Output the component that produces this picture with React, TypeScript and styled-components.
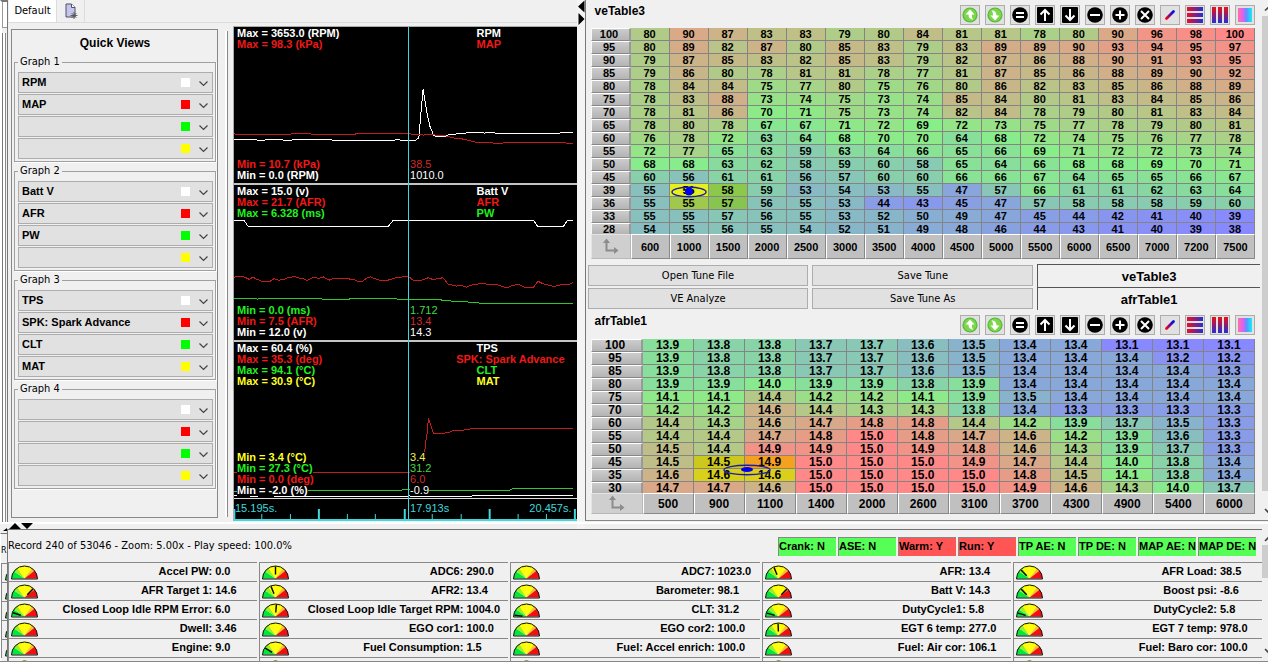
import React from 'react';
import styled, { createGlobalStyle } from 'styled-components';

const UI = '"DejaVu Sans Condensed", "DejaVu Sans", sans-serif';
const ARIAL = '"Liberation Sans", Arial, sans-serif';
const CYAN = '#3fd8dc';

const Global = createGlobalStyle`
  * { box-sizing: border-box; }
  body { margin: 0; background: #f0f0f0; color: #000; font: 11px/12px ${UI}; }
`;

/* ---------- frame ---------- */
const Page = styled.div`
  display: flex;
  flex-direction: column;
  height: 100vh;
  overflow: hidden;
  background: #f0f0f0;
`;
const Upper = styled.div`
  flex: 1 1 auto;
  display: flex;
  min-height: 0;
  overflow: hidden;
`;
const EdgeStrip = styled.div`
  flex: 0 0 8px;
  margin-bottom: 5px;
  border-left: 2px solid #fff;
  border-right: 1px solid #777;
  border-top: 2px solid #777;
  display: flex;
  flex-direction: column;
`;
const EdgeTab = styled.div`
  height: 26px;
  background: #fff;
  border: 1px solid #999;
  border-width: 0 0 1px 1px;
`;
const EdgeBody = styled.div`
  flex: 1;
  margin-top: 5px;
  border-left: 1px solid #777;
  box-shadow: inset 2px 0 0 #fff, inset 3px 0 0 #888;
`;
const LeftPane = styled.div`
  flex: 569 1 0;
  min-width: 0;
  display: flex;
  flex-direction: column;
  padding-bottom: 8px;
`;
const TabBar = styled.div`
  display: flex;
  height: 23px;
  padding-left: 1px;
  border-bottom: 1px solid #dcdcdc;
`;
const Tab = styled.button<{ $active?: boolean }>`
  height: 22px;
  width: ${p => (p.$active ? 47 : 29)}px;
  padding: 0;
  border: 1px solid ${p => (p.$active ? '#fff' : '#dcdcdc')};
  border-width: 0 1px;
  background: ${p => (p.$active ? '#fff' : '#f0f0f0')};
  font: 11px/20px ${UI};
  display: flex;
  justify-content: center;
  align-items: center;
`;
const LeftBody = styled.div`
  flex: 1;
  min-height: 0;
  display: flex;
  padding: 3px 0 0 3px;
`;
const QuickPanel = styled.aside`
  flex: 0 0 207px;
  margin: 3px 0 3px;
  border: 1px solid #888;
  padding: 0 1px 0 2px;
  overflow: hidden;
`;
const QuickTitle = styled.h2`
  margin: 0;
  padding: 7px 0 5px;
  font: bold 12px/13px ${ARIAL};
  text-align: center;
`;
const Group = styled.fieldset`
  margin: 0 0 2px;
  padding: 3px 2px 1px 3px;
  border: 1px solid #a0a0a0;
  min-width: 0;
  box-shadow: 1px 1px 0 #fff;
`;
const Legend = styled.legend`
  margin-left: 0;
  padding: 0 2px;
  font: 11px/14px ${UI};
`;
const ComboWrap = styled.label`
  position: relative;
  display: block;
  height: 21px;
  margin-bottom: 1px;
`;
const Combo = styled.select`
  appearance: none;
  display: block;
  width: 100%;
  height: 21px;
  padding: 0 40px 0 3px;
  border: 1px solid #adadad;
  border-radius: 0;
  background: #e1e1e1;
  color: #000;
  font: bold 11px/19px ${ARIAL};
`;
const Swatch = styled.span<{ $color: string }>`
  position: absolute;
  right: 23px;
  top: 6px;
  width: 9px;
  height: 9px;
  background: ${p => p.$color};
  pointer-events: none;
`;
const Chevron = styled.svg`
  position: absolute;
  right: 5px;
  top: 8px;
  pointer-events: none;
`;
const Divider = styled.div`
  flex: 0 0 15px;
  margin: 5px 0 4px;
  background: linear-gradient(#888, #888) 9px 0 / 1px 100% no-repeat,
    linear-gradient(#fff, #fff) 7px 0 / 2px 100% no-repeat;
`;

/* ---------- graphs ---------- */
const Graphs = styled.div`
  position: relative;
  flex: 1;
  min-width: 0;
  display: flex;
  flex-direction: column;
  background: #000;
  border-left: 1px solid #aaa;
  border-top: 1px solid #aaa;
`;
const PlotBox = styled.section`
  position: relative;
  flex: 1;
  min-height: 0;
  & + & { border-top: 2px solid #c4c4c4; }
`;
const PlotSvg = styled.svg`
  position: absolute;
  inset: 0;
  width: 100%;
  height: 100%;
  polyline {
    fill: none;
    stroke-width: 1px;
    vector-effect: non-scaling-stroke;
    shape-rendering: crispEdges;
  }
`;
const Stack = styled.div<{ $at: 'max' | 'min' | 'title' | 'value' }>`
  position: absolute;
  display: flex;
  flex-direction: column;
  align-items: flex-start;
  font: bold 11px/11px ${ARIAL};
  white-space: nowrap;
  ${p => p.$at === 'max' && 'left: 3px; top: 1px;'}
  ${p => p.$at === 'min' && 'left: 3px; bottom: 2px;'}
  ${p => p.$at === 'value' && 'left: 51.4%; bottom: 2px; font-weight: normal;'}
  ${p => p.$at === 'title' && 'right: 12px; top: 1px; width: 88px; align-items: flex-end;'}
`;
const Line = styled.span<{ $color: string; $wide?: boolean }>`
  color: ${p => p.$color};
  background: #000;
  ${p => p.$wide && 'min-width: 100%;'}
`;
const Cursor = styled.div`
  position: absolute;
  z-index: 1;
  left: 50.8%;
  top: 0;
  bottom: 0;
  width: 1px;
  background: ${CYAN};
`;
const Axis = styled.div`
  position: relative;
  flex: 0 0 23px;
  border-top: 1px solid #ddd;
  border-bottom: 2px solid ${CYAN};
  font: 11px/12px ${ARIAL};
  color: ${CYAN};
`;
const AxisTicks = styled.svg`
  position: absolute;
  inset: 0;
  width: 100%;
  height: 100%;
`;
const AxisLabel = styled.span<{ $pos: string }>`
  position: absolute;
  top: 3px;
  ${p => p.$pos}
`;
const Splitter = styled.div`
  flex: 0 0 8px;
  padding-left: 1px;
  background: #f4f4f4;
`;

/* ---------- right pane ---------- */
const RightPane = styled.div`
  flex: 683 1 0;
  min-width: 0;
  display: flex;
  margin-bottom: 8px;
  border-left: 1px solid #777;
  border-bottom: 1px solid #888;
`;
const Tables = styled.div`
  flex: 1;
  min-width: 0;
  padding: 0 2px 0 2px;
`;
const TableHead = styled.div<{ $h: number }>`
  display: flex;
  justify-content: space-between;
  align-items: flex-start;
  height: ${p => p.$h}px;
  padding: 5px 5px 0 7px;
`;
const TableTitle = styled.h3`
  margin: 0;
  font: bold 12px/12px ${ARIAL};
`;
const Tools = styled.div`
  display: flex;
  gap: 5px;
`;
const ToolButton = styled.button`
  width: 20px;
  height: 20px;
  padding: 1px;
  border: 1px solid #adadad;
  background: #e1e1e1;
  svg { display: block; }
`;
const TableWrap = styled.div`
  padding: 0 5px 0 3px;
`;
const MapTable = styled.table<{ $big?: boolean }>`
  width: 100%;
  table-layout: fixed;
  border-collapse: separate;
  border-spacing: 0;
  font: bold ${p => (p.$big ? 12 : 11)}px/12px ${ARIAL};
  text-align: center;
`;
const HeadCol = styled.col<{ $w: number }>`
  width: ${p => p.$w}px;
`;
const Cell = styled.td<{ $bg: string; $last: boolean }>`
  position: relative;
  padding: 1px 0 0;
  background: ${p => p.$bg};
  border-right: 1px solid #848484;
  border-bottom: ${p => (p.$last ? 0 : 1)}px solid #848484;
  line-height: ${p => (p.$last ? 10 : 11)}px;
`;
const RowHead = styled.th<{ $last: boolean }>`
  padding: 0 2px 0 0;
  border: solid;
  border-width: 1px 2px ${p => (p.$last ? 0 : 1)}px 1px;
  border-color: #fff #999 #888 #f8f8f8;
  background: linear-gradient(#ccc, #b4b4b4);
  font-weight: bold;
  line-height: ${p => (p.$last ? 10 : 11)}px;
`;
const ColHead = styled.th<{ $h: number }>`
  height: ${p => p.$h}px;
  padding: 0;
  border: 1px solid;
  border-color: #fff #888 #888 #fff;
  background: #c0c0c0;
  font-weight: bold;
`;
const Corner = styled(ColHead)`
  background: #cfcfcf;
  border-color: #e4e4e4 #b8b8b8 #b8b8b8 #e4e4e4;
  svg { display: block; margin: 0 auto; }
`;
const Marker = styled.svg<{ $x: string; $y: number }>`
  position: absolute;
  z-index: 1;
  left: ${p => p.$x};
  top: ${p => p.$y}px;
  transform: translate(-50%, -50%);
  pointer-events: none;
`;
const TuneBar = styled.div`
  display: grid;
  grid-template-columns: 221fr 221fr 223fr;
  column-gap: 4px;
  padding-top: 5px;
`;
const TuneCol = styled.div`
  display: flex;
  flex-direction: column;
  gap: 2px;
  padding-top: 1px;
`;
const TuneButton = styled.button`
  height: 21px;
  padding: 0;
  border: 1px solid #adadad;
  background: #e1e1e1;
  font: 11px/18px ${UI};
`;
const TableList = styled.div`
  border-left: 1px solid #555;
`;
const TableEntry = styled.button`
  display: block;
  width: 100%;
  height: 23px;
  padding: 2px 0 0;
  border: 0;
  border-top: 1px solid #555;
  background: none;
  font: bold 13px/20px ${ARIAL};
`;
const ScrollBar = styled.div<{ $thumb: number }>`
  flex: 0 0 6px;
  display: flex;
  flex-direction: column;
  justify-content: space-between;
  background: linear-gradient(#cdcdcd, #cdcdcd) 0 16px / 6px ${p => p.$thumb}px no-repeat #f0f0f0;
  overflow: hidden;
  svg { display: block; }
`;

/* ---------- lower pane ---------- */
const Lower = styled.div`
  position: relative;
  flex: 0 0 133px;
  min-height: 0;
  display: flex;
  border-bottom: 1px solid #888;
`;
const SplitArrows = styled.svg`
  position: absolute;
  left: 3px;
  top: -7px;
`;
const WhiteLine = styled.div`
  position: absolute;
  left: 0;
  right: 0;
  top: -7px;
  height: 2px;
  background: #fff;
`;
const Ghost = styled.div`
  flex: 0 0 7px;
  min-height: 0;
  margin-top: 4px;
  padding-top: 10px;
  border-left: 1px solid #fff;
  border-top: 1px solid #777;
  overflow: hidden;
  font: 9px/12px ${UI};
`;
const GhostRows = styled.div`
  margin-top: 7px;
`;
const GhostRow = styled.div`
  height: 19px;
  padding: 2px 0 0 3px;
  border-top: 1px solid #888;
  border-left: 1px solid #888;
`;
const Info = styled.div`
  flex: 1;
  min-width: 0;
  min-height: 0;
  border-left: 1px solid #777;
  border-top: 1px solid #707070;
  overflow: hidden;
`;
const StatusRow = styled.div`
  display: flex;
  justify-content: space-between;
  align-items: center;
  height: 32px;
  padding-right: 6px;
`;
const StatusText = styled.span`
  font: 11px/14px ${UI};
`;
const Flags = styled.div`
  display: flex;
  gap: 2px;
`;
const Flag = styled.span<{ $on?: boolean }>`
  width: 58px;
  height: 19px;
  border-top: 1px solid #888;
  border-left: 1px solid #888;
  background: ${p => (p.$on ? '#ff5555' : '#55ff55')};
  font: bold 11px/17px ${ARIAL};
  white-space: nowrap;
`;
const GaugeGrid = styled.div`
  display: grid;
  grid-template-columns: repeat(5, minmax(0, 1fr));
  column-gap: 2px;
`;
const GaugeCell = styled.div`
  display: flex;
  height: 19px;
  padding: 2px 0 0 2px;
  border-top: 1px solid #888;
  border-left: 1px solid #888;
  overflow: hidden;
  font: bold 11px/12px ${ARIAL};
  white-space: nowrap;
`;
const GaugeLabel = styled.span`
  flex: 1;
  text-align: right;
`;
const GaugeValue = styled.span`
  flex: 0 0 45px;
  padding-left: 3px;
`;

/* ---------- data ---------- */
const W = '#ffffff', R = '#ff0000', G = '#00ff00', Y = '#ffff00';
const SW = [W, R, G, Y];
const groups = [
  ['RPM', 'MAP', '', ''],
  ['Batt V', 'AFR', 'PW', ''],
  ['TPS', 'SPK: Spark Advance', 'CLT', 'MAT'],
  ['', '', '', ''],
];

const GW = '#fff', GR = '#f01818', GG = '#22f022', GY = '#ffff20';
type L = [string, string];
interface PlotData { box: string; max: L[]; title: L[]; min: L[]; value: L[]; lines: L[] }
const plots: PlotData[] = [
  {
    box: '12 81 1029 468',
    max: [['Max = 3653.0 (RPM)', GW], ['Max = 98.3 (kPa)', GR]],
    title: [['RPM', GW], ['MAP', GR]],
    min: [['Min = 10.7 (kPa)', GR], ['Min = 0.0 (RPM)', GW]],
    value: [['38.5', '#d02c2c'], ['1010.0', GW]],
    lines: [
      ['12,419 70,419 82,421 105,421 112,419 150,419 160,421 185,421 198,419 300,419 308,421 495,421 500,419 512,421 558,421 561,418 567,417 570,380 580,268 592,340 600,378 607,395 612,408 632,411 645,410 660,404 690,402 725,398 750,398 765,400 780,398 800,400 990,400 1000,397 1022,397 1030,400', GW],
      ['12,401 18,404 180,404 188,401 240,401 246,404 375,404 380,401 540,401 545,404 575,404 580,406 600,404 612,404 620,407 655,409 665,414 690,416 710,420 740,428 780,428 790,430 820,430 828,427 1000,427 1010,430 1030,430', '#c41c1c'],
    ],
  },
  {
    box: '12 555 1029 468',
    max: [['Max = 15.0 (v)', GW], ['Max = 21.7 (AFR)', GR], ['Max = 6.328 (ms)', GG]],
    title: [['Batt V', GW], ['AFR', GR], ['PW', GG]],
    min: [['Min = 0.0 (ms)', GG], ['Min = 7.5 (AFR)', GR], ['Min = 12.0 (v)', GW]],
    value: [['1.712', '#44d844'], ['13.4', '#d02c2c'], ['14.3', GW]],
    lines: [
      ['12,661 42,661 54,679 476,679 490,661 912,661 924,679 1002,679 1014,661 1030,661', GW],
      ['12,832 25,829 45,832 58,839 68,832 80,838 95,844 120,845 132,837 145,841 160,840 178,832 198,831 210,836 222,837 232,842 250,832 268,836 280,831 298,841 312,836 370,838 382,844 398,844 412,834 422,831 435,837 450,841 475,841 498,834 520,831 535,829 550,841 575,841 595,834 612,840 625,836 640,834 655,853 680,859 690,856 710,862 725,856 760,850 775,855 795,853 815,859 832,865 850,856 870,855 885,862 912,862 925,844 940,852 960,857 975,860 995,855 1015,855 1030,849', '#c41c1c'],
      ['12,897 45,897 52,895 75,895 82,898 92,896 270,896 278,898 358,898 365,896 495,896 502,898 632,898 636,901 660,901 665,904 705,904 715,907 750,910 1030,910', '#2cc82c'],
    ],
  },
  {
    box: '12 1029 1029 465',
    max: [['Max = 60.4 (%)', GW], ['Max = 35.3 (deg)', GR], ['Max = 94.1 (°C)', GG], ['Max = 30.9 (°C)', GY]],
    title: [['TPS', GW], ['SPK: Spark Advance', GR], ['CLT', GG], ['MAT', GY]],
    min: [['Min = 3.4 (°C)', GY], ['Min = 27.3 (°C)', GG], ['Min = 0.0 (deg)', GR], ['Min = -2.0 (%)', GW]],
    value: [['3.4', '#f0f050'], ['31.2', '#44d844'], ['6.0', '#d02c2c'], ['-0.9', GW]],
    lines: [
      ['12,1420 540,1420', '#c41c1c'],
      ['585,1359 588,1325 593,1298 596,1255 602,1275 612,1303 630,1303 660,1299 668,1294 690,1294 725,1288 1030,1288', '#c41c1c'],
      ['12,1477 40,1477 240,1474 510,1474 518,1470 540,1470 545,1472 840,1472 848,1467 1030,1467', '#2cc82c'],
      ['12,1489 60,1489 75,1492 85,1488 130,1488 140,1491 320,1491 340,1492 370,1489 390,1492 445,1489 480,1492 540,1489 630,1492 640,1489 720,1492 728,1489 1030,1489', GW],
    ],
  },
];

const veRows = [100, 95, 90, 85, 80, 75, 70, 65, 60, 55, 50, 45, 39, 36, 33, 28];
const veCols = [600, 1000, 1500, 2000, 2500, 3000, 3500, 4000, 4500, 5000, 5500, 6000, 6500, 7000, 7200, 7500];
const ve = `80 90 87 83 83 79 80 84 81 81 78 80 90 96 98 100
80 89 82 87 80 85 83 79 83 89 89 90 93 94 95 97
79 87 85 83 82 85 83 79 82 87 86 88 90 91 93 95
79 86 80 78 81 81 78 77 81 87 85 86 88 89 90 92
78 84 84 75 77 80 75 76 80 86 82 83 85 86 88 89
78 83 88 73 74 75 73 74 85 84 80 81 83 84 85 86
78 81 86 70 71 75 73 74 82 84 78 79 80 81 83 84
78 80 78 67 67 71 72 69 72 73 75 77 78 79 80 81
76 78 72 63 64 68 70 70 64 68 72 74 75 76 77 78
72 77 65 63 59 63 64 66 65 66 69 71 72 72 73 74
68 68 63 62 58 59 60 58 65 64 66 68 68 69 70 71
60 56 61 61 56 57 60 60 66 66 67 64 65 65 66 67
55 56 58 59 53 54 53 55 47 57 66 61 61 62 63 64
55 55 57 56 55 53 44 43 45 47 57 58 58 58 59 60
55 55 57 56 55 53 52 50 49 47 45 44 42 41 40 39
54 55 56 55 54 52 51 49 48 46 44 43 41 40 39 38`;
const afrRows = [100, 95, 85, 80, 75, 70, 60, 55, 50, 45, 35, 30];
const afrCols = [500, 900, 1100, 1400, 2000, 2600, 3100, 3700, 4300, 4900, 5400, 6000];
const afr = `13.9 13.8 13.8 13.7 13.7 13.6 13.5 13.4 13.4 13.1 13.1 13.1
13.9 13.8 13.8 13.7 13.7 13.6 13.5 13.4 13.4 13.4 13.2 13.2
13.9 13.8 13.8 13.7 13.7 13.6 13.5 13.4 13.4 13.4 13.4 13.3
13.9 13.9 14.0 13.9 13.9 13.8 13.9 13.4 13.4 13.4 13.4 13.4
14.1 14.1 14.4 14.2 14.2 14.1 13.9 13.5 13.4 13.4 13.4 13.4
14.2 14.2 14.6 14.4 14.3 14.3 13.8 13.4 13.3 13.3 13.3 13.3
14.4 14.3 14.6 14.7 14.8 14.8 14.4 14.2 13.9 13.7 13.5 13.3
14.4 14.4 14.7 14.8 15.0 14.8 14.7 14.6 14.2 13.9 13.6 13.3
14.5 14.4 14.9 14.9 15.0 14.9 14.8 14.6 14.3 13.9 13.7 13.3
14.5 14.5 14.9 15.0 15.0 15.0 14.9 14.7 14.4 14.0 13.8 13.4
14.6 14.6 14.6 15.0 15.0 15.0 15.0 14.8 14.5 14.1 13.8 13.4
14.7 14.7 14.6 15.0 15.0 15.0 15.0 14.9 14.6 14.3 14.0 13.7`;

function heat(v: number, lo: number, hi: number) {
  const t = (v - lo) / (hi - lo);
  const mix = (a: number, b: number, k: number) => Math.round(a + (b - a) * k);
  if (t < 0.5) return `rgb(136, ${mix(136, 238, t * 2)}, ${mix(255, 136, t * 2)})`;
  const k = t * 2 - 1;
  return `rgb(${mix(136, 255, k)}, ${mix(238, 136, k)}, 136)`;
}

const veHot: Record<string, string> = { '12-1': '#e6f01a', '12-2': '#8cc84c', '13-1': '#a0c84c', '13-2': '#88c450' };
const afrHot: Record<string, string> = { '9-1': '#ccc81e', '9-2': '#f4a020', '10-1': '#d8d01a', '10-2': '#dccf1c' };

const gauges: [string, string, number | null][] = [
  ['Accel PW:', '0.0', null], ['ADC6:', '290.0', 90], ['ADC7:', '1023.0', null], ['AFR:', '13.4', 112], ['AFR Load:', '38.5', 135],
  ['AFR Target 1:', '14.6', 45], ['AFR2:', '13.4', 112], ['Barometer:', '98.1', null], ['Batt V:', '14.3', 45], ['Boost psi:', '-8.6', 135],
  ['Closed Loop Idle RPM Error:', '6.0', 162], ['Closed Loop Idle Target RPM:', '1004.0', 86], ['CLT:', '31.2', 174], ['DutyCycle1:', '5.8', 164], ['DutyCycle2:', '5.8', 164],
  ['Dwell:', '3.46', null], ['EGO cor1:', '100.0', null], ['EGO cor2:', '100.0', null], ['EGT 6 temp:', '277.0', 92], ['EGT 7 temp:', '978.0', null],
  ['Engine:', '9.0', null], ['Fuel Consumption:', '1.5', 148], ['Fuel: Accel enrich:', '100.0', null], ['Fuel: Air cor:', '106.1', null], ['Fuel: Baro cor:', '100.0', null],
];

/* ---------- drawings ---------- */
const sectors = ['#00e838', '#98f020', '#ffff00', '#ffff00', '#ffc020', '#f01010'];
const sectorAngles = [180, 146, 124, 90, 54, 38, 0];
function GaugeIcon({ needle }: { needle: number | null }) {
  const pt = (deg: number, r: number) =>
    `${(13.5 + r * Math.cos((deg * Math.PI) / 180)).toFixed(2)},${(13.5 - r * Math.sin((deg * Math.PI) / 180)).toFixed(2)}`;
  return (
    <svg width="28" height="16" viewBox="0 0 28 16" aria-hidden="true">
      {sectors.map((c, i) => (
        <path key={i} fill={c} d={`M13.5,13.5 L${pt(sectorAngles[i], 13)} A13,13 0 0 1 ${pt(sectorAngles[i + 1], 13)} Z`} />
      ))}
      <path d="M0.5,14 A13,13 0 0 1 26.5,14 Z" fill="none" stroke="#111" />
      {needle !== null && (
        <polyline points={`${pt(needle, 4)} ${pt(needle, 12)}`} stroke="#000" strokeWidth="1.4" />
      )}
    </svg>
  );
}

const Arrow = ({ up }: { up: boolean }) => (
  <g>
    <circle cx="8" cy="8" r="7.6" fill="#58b838" />
    <circle cx="8" cy="8" r="6.4" fill="#7cd64c" />
    <path
      transform={up ? undefined : 'rotate(180 8 8)'}
      d="M8 2.5 L12.5 7.5 H9.8 Q9.6 11 11.5 12.8 Q6.6 12.4 6.4 7.5 H3.6 Z"
      fill="#fff"
    />
  </g>
);
const Disc = ({ d }: { d: string }) => (
  <g>
    <circle cx="8" cy="8" r="7.8" fill="#000" />
    <path d={d} stroke="#fff" strokeWidth="2" fill="none" />
  </g>
);
const Square = ({ d }: { d: string }) => (
  <g>
    <rect width="16" height="16" rx="1" fill="#000" />
    <path d={d} stroke="#fff" strokeWidth="2" fill="none" />
  </g>
);
const tools: [string, React.ReactNode][] = [
  ['Load table', <Arrow up />],
  ['Save table', <Arrow up={false} />],
  ['Set value', <Disc d="M4 6H12M4 10H12" />],
  ['Increase', <Square d="M8 14V3.5M3.5 7.5L8 3L12.5 7.5" />],
  ['Decrease', <Square d="M8 2V12.5M3.5 8.5L8 13L12.5 8.5" />],
  ['Subtract', <Disc d="M3 8H13" />],
  ['Add', <Disc d="M3.5 8H12.5M8 3.5V12.5" />],
  ['Multiply', <Disc d="M4 4L12 12M12 4L4 12" />],
  ['Interpolate', <path d="M4.5 11.5L11.5 4.5" stroke="url(#diag)" strokeWidth="2.8" strokeLinecap="round" />],
  ['Interpolate horizontally', <g fill="url(#horiz)"><rect y="0" width="16" height="4" /><rect y="6" width="16" height="4" /><rect y="12" width="16" height="4" /></g>],
  ['Interpolate vertically', <g fill="url(#vert)"><rect x="0" width="4" height="16" /><rect x="6" width="4" height="16" /><rect x="12" width="4" height="16" /></g>],
  ['Smooth', <rect x="1" y="1" width="14" height="14" fill="url(#rainbow)" />],
];

const Gradients = styled.svg`
  position: absolute;
  width: 0;
  height: 0;
`;

function Toolbar() {
  return (
    <Tools>
      {tools.map(([name, art]) => (
        <ToolButton key={name} aria-label={name} title={name}>
          <svg width="16" height="16" viewBox="0 0 16 16">{art}</svg>
        </ToolButton>
      ))}
    </Tools>
  );
}

interface MapProps {
  rows: number[]; cols: number[]; data: string; lo: number; hi: number; headW: number; footH: number;
  big?: boolean; hot: Record<string, string>; marker: { cell: string; x: string; y: number; rx: number; dot: number };
}
function MapGrid({ rows, cols, data, lo, hi, headW, footH, big, hot, marker }: MapProps) {
  const values = data.split('\n').map(r => r.split(' '));
  return (
    <TableWrap>
      <MapTable $big={big}>
        <colgroup>
          <HeadCol $w={headW} />
          {cols.map(c => <col key={c} />)}
        </colgroup>
        <tbody>
          {values.map((r, i) => {
            const last = i === rows.length - 1;
            return (
              <tr key={rows[i]}>
                <RowHead scope="row" $last={last}>{rows[i]}</RowHead>
                {r.map((v, j) => (
                  <Cell key={j} $last={last} $bg={hot[`${i}-${j}`] || heat(+v, lo, hi)}>
                    {v}
                    {marker.cell === `${i}-${j}` && (
                      <Marker $x={marker.x} $y={marker.y} width={marker.rx * 2 + 2} height="12" viewBox={`${-marker.rx - 1} -6 ${marker.rx * 2 + 2} 12`}>
                        <ellipse rx={marker.rx} ry="4.8" fill="none" stroke="#1c1ca8" strokeWidth="1.4" />
                        <ellipse rx={marker.dot} ry={marker.dot > 5 ? 2.6 : 4} cy="-0.5" fill="#0000f0" />
                      </Marker>
                    )}
                  </Cell>
                ))}
              </tr>
            );
          })}
        </tbody>
        <tfoot>
          <tr>
            <Corner as="td" $h={footH}>
              <svg width="18" height="18" viewBox="0 0 18 18" aria-hidden="true">
                <path d="M4.5 4V12.5H13" fill="none" stroke="#8c8c8c" strokeWidth="2" />
                <path d="M1 5L4.5 0.5L8 5ZM12 9L16.5 12.5L12 16Z" fill="#8c8c8c" />
              </svg>
            </Corner>
            {cols.map(c => <ColHead key={c} scope="col" $h={footH}>{c}</ColHead>)}
          </tr>
        </tfoot>
      </MapTable>
    </TableWrap>
  );
}

function Plot({ p }: { p: PlotData }) {
  const stack = (at: 'max' | 'min' | 'title' | 'value', items: L[]) => (
    <Stack $at={at}>
      {items.map(([t, c]) => <Line key={t} $color={c} $wide={at === 'title'}>{t}</Line>)}
    </Stack>
  );
  return (
    <PlotBox>
      <PlotSvg viewBox={p.box} preserveAspectRatio="none" aria-hidden="true">
        {p.lines.map(([pts, c], i) => <polyline key={i} points={pts} stroke={c} />)}
      </PlotSvg>
      {stack('max', p.max)}
      {stack('title', p.title)}
      {stack('min', p.min)}
      {stack('value', p.value)}
    </PlotBox>
  );
}

const bigTicks = [13, 267, 525, 780, 1036];
const smallTicks = [95, 181, 352, 436, 607, 694, 865, 950];

export default function App() {
  return (
    <Page>
      <Global />
      <Gradients aria-hidden="true">
        <defs>
          <linearGradient id="diag" gradientUnits="userSpaceOnUse" x1="4" y1="12" x2="12" y2="4">
            <stop offset="0.1" stopColor="#f00020" /><stop offset="0.8" stopColor="#1010e0" />
          </linearGradient>
          <linearGradient id="horiz"><stop offset="0.1" stopColor="#e01030" /><stop offset="1" stopColor="#2030d8" /></linearGradient>
          <linearGradient id="vert" x2="0" y2="1"><stop offset="0.1" stopColor="#e01020" /><stop offset="1" stopColor="#2030d8" /></linearGradient>
          <linearGradient id="rainbow">
            <stop offset="0" stopColor="#ff70a0" /><stop offset="0.35" stopColor="#e060f0" />
            <stop offset="0.6" stopColor="#6090ff" /><stop offset="1" stopColor="#10f0f8" />
          </linearGradient>
        </defs>
      </Gradients>
      <Upper>
        <EdgeStrip><EdgeTab /><EdgeBody /></EdgeStrip>
        <LeftPane>
          <TabBar>
            <Tab $active>Default</Tab>
            <Tab aria-label="New tab">
              <svg width="14" height="16" viewBox="0 0 14 16">
                <path d="M2 1H7.5L11 4.5V14H2Z" fill="#c4c4ec" stroke="#505068" />
                <path d="M7.5 1V4.5H11" fill="#fff" stroke="#505068" />
                <path d="M10 9V16M6.5 12.5H13.5M7.6 10.1L12.4 14.9M12.4 10.1L7.6 14.9" stroke="#555" strokeWidth="0.9" />
              </svg>
            </Tab>
          </TabBar>
          <LeftBody>
            <QuickPanel>
              <QuickTitle>Quick Views</QuickTitle>
              {groups.map((g, gi) => (
                <Group key={gi}>
                  <Legend>Graph {gi + 1}</Legend>
                  {g.map((v, i) => (
                    <ComboWrap key={i}>
                      <Combo aria-label={`Graph ${gi + 1} channel ${i + 1}`} defaultValue={v}>
                        <option value={v}>{v}</option>
                      </Combo>
                      <Swatch $color={SW[i]} />
                      <Chevron width="9" height="7" viewBox="0 0 9 7">
                        <path d="M0.5 1.5L4.5 5.5L8.5 1.5" fill="none" stroke="#444" strokeWidth="1.2" />
                      </Chevron>
                    </ComboWrap>
                  ))}
                </Group>
              ))}
            </QuickPanel>
            <Divider />
            <Graphs>
              {plots.map(p => <Plot key={p.box} p={p} />)}
              <Axis>
                <AxisTicks viewBox="12 0 1029 20" preserveAspectRatio="none" aria-hidden="true">
                  {bigTicks.map(x => <rect key={x} x={x - 3} y="10" width="6" height="10" fill={CYAN} />)}
                  {smallTicks.map(x => <rect key={x} x={x - 1} y="15" width="3" height="5" fill={CYAN} />)}
                </AxisTicks>
                <AxisLabel $pos="left: 1px;">15.195s.</AxisLabel>
                <AxisLabel $pos="left: 51.4%;">17.913s</AxisLabel>
                <AxisLabel $pos="right: 5px;">20.457s.</AxisLabel>
              </Axis>
              <Cursor />
            </Graphs>
          </LeftBody>
        </LeftPane>
        <Splitter>
          <svg width="7" height="26" viewBox="0 0 7 26" aria-hidden="true">
            <path d="M6.5 0.5V12.5L0 6.5ZM0.5 13V25L6.5 19Z" fill="#000" />
          </svg>
        </Splitter>
        <RightPane>
          <Tables>
            <TableHead $h={28}><TableTitle>veTable3</TableTitle><Toolbar /></TableHead>
            <MapGrid rows={veRows} cols={veCols} data={ve} lo={38} hi={100} headW={40} footH={25} hot={veHot}
              marker={{ cell: '12-1', x: '50%', y: 8, rx: 17, dot: 4 }} />
            <TuneBar>
              <TuneCol><TuneButton>Open Tune File</TuneButton><TuneButton>VE Analyze</TuneButton></TuneCol>
              <TuneCol><TuneButton>Save Tune</TuneButton><TuneButton>Save Tune As</TuneButton></TuneCol>
              <TableList><TableEntry>veTable3</TableEntry><TableEntry>afrTable1</TableEntry></TableList>
            </TuneBar>
            <TableHead $h={29}><TableTitle>afrTable1</TableTitle><Toolbar /></TableHead>
            <MapGrid big rows={afrRows} cols={afrCols} data={afr} lo={13.1} hi={15} headW={52} footH={21} hot={afrHot}
              marker={{ cell: '9-1', x: '106%', y: 14, rx: 23, dot: 6 }} />
          </Tables>
          <ScrollBar $thumb={475}>
            <svg width="6" height="16" viewBox="0 0 6 16"><path d="M3 10.5L8 6" fill="none" stroke="#444" strokeWidth="1.6" /></svg>
            <svg width="6" height="16" viewBox="0 0 6 16"><path d="M3 5L8 10" fill="none" stroke="#444" strokeWidth="1.6" /></svg>
          </ScrollBar>
        </RightPane>
      </Upper>
      <Lower>
        <WhiteLine />
        <SplitArrows width="32" height="9" viewBox="0 0 32 9" aria-hidden="true">
          <path d="M6 7L12 1L18 7ZM18 1H30L24 7ZM0 9L4 6V9Z" fill="#000" />
        </SplitArrows>
        <Ghost>
          R
          <GhostRows>
            {[0, 1, 2, 3, 4].map(i => <GhostRow key={i}><GaugeIcon needle={null} /></GhostRow>)}
          </GhostRows>
        </Ghost>
        <Info>
          <StatusRow>
            <StatusText>Record 240 of 53046 - Zoom: 5.00x - Play speed: 100.0%</StatusText>
            <Flags>
              <Flag>Crank: N</Flag><Flag>ASE: N</Flag><Flag $on>Warm: Y</Flag><Flag $on>Run: Y</Flag>
              <Flag>TP AE: N</Flag><Flag>TP DE: N</Flag><Flag>MAP AE: N</Flag><Flag>MAP DE: N</Flag>
            </Flags>
          </StatusRow>
          <GaugeGrid>
            {gauges.map(([l, v, n]) => (
              <GaugeCell key={l}>
                <GaugeIcon needle={n} />
                <GaugeLabel>{l}</GaugeLabel>
                <GaugeValue>{v}</GaugeValue>
              </GaugeCell>
            ))}
            {[0, 1, 2, 3, 4].map(i => <GaugeCell key={i}><GaugeIcon needle={null} /></GaugeCell>)}
          </GaugeGrid>
        </Info>
        <ScrollBar $thumb={33}>
          <svg width="6" height="16" viewBox="0 0 6 16"><path d="M3 12L8 7" fill="none" stroke="#444" strokeWidth="1.6" /></svg>
          <svg width="6" height="16" viewBox="0 0 6 16"><path d="M3 4L8 9" fill="none" stroke="#444" strokeWidth="1.6" /></svg>
        </ScrollBar>
      </Lower>
    </Page>
  );
}
